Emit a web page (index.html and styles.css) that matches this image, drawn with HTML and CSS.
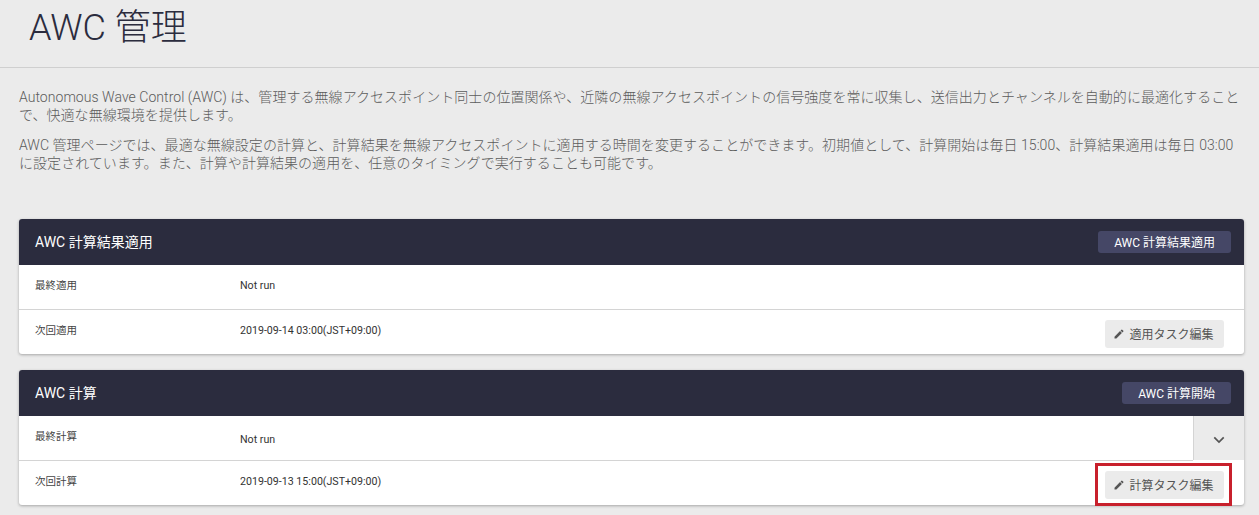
FILE: index.html
```html
<!DOCTYPE html>
<html lang="ja">
<head>
<meta charset="utf-8">
<title>AWC 管理</title>
<link rel="stylesheet" href="styles.css">
</head>
<body>
<header class="page-head"><h1>AWC 管理</h1></header>
<main class="content">
  <section class="intro">
    <p>Autonomous Wave Control (AWC) は、管理する無線アクセスポイント同士の位置関係や、近隣の無線アクセスポイントの信号強度を常に収集し、送信出力とチャンネルを自動的に最適化することで、快適な無線環境を提供します。</p>
    <p>AWC 管理ページでは、最適な無線設定の計算と、計算結果を無線アクセスポイントに適用する時間を変更することができます。初期値として、計算開始は毎日 15:00、計算結果適用は毎日 03:00 に設定されています。また、計算や計算結果の適用を、任意のタイミングで実行することも可能です。</p>
  </section>
  <section class="card">
    <div class="card-head"><h2>AWC 計算結果適用</h2><button class="head-btn">AWC 計算結果適用</button></div>
    <div class="row">
      <div class="label">最終適用</div><div class="value">Not run</div>
    </div>
    <div class="row last">
      <div class="label">次回適用</div><div class="value">2019-09-14 03:00(JST+09:00)</div>
      <button class="edit-btn"><svg class="pen" viewBox="0 0 24 24"><path d="M3 17.25V21h3.75L17.81 9.94l-3.75-3.75L3 17.25zM20.71 7.04a1 1 0 0 0 0-1.41l-2.34-2.34a1 1 0 0 0-1.41 0l-1.83 1.83 3.75 3.75 1.83-1.83z"/></svg>適用タスク編集</button>
    </div>
  </section>
  <section class="card">
    <div class="card-head"><h2>AWC 計算</h2><button class="head-btn">AWC 計算開始</button></div>
    <div class="row expandable">
      <div class="row-main">
        <div class="label">最終計算</div><div class="value shifted">Not run</div>
      </div>
      <div class="toggle"><svg class="chevron" viewBox="0 0 14 9"><path d="M1.5 1.5 7 7l5.5-5.5"/></svg></div>
    </div>
    <div class="row last">
      <div class="label">次回計算</div><div class="value">2019-09-13 15:00(JST+09:00)</div>
      <span class="annotated">
        <button class="edit-btn"><svg class="pen" viewBox="0 0 24 24"><path d="M3 17.25V21h3.75L17.81 9.94l-3.75-3.75L3 17.25zM20.71 7.04a1 1 0 0 0 0-1.41l-2.34-2.34a1 1 0 0 0-1.41 0l-1.83 1.83 3.75 3.75 1.83-1.83z"/></svg>計算タスク編集</button>
        <span class="red-box"></span>
      </span>
    </div>
  </section>
</main>
</body>
</html>
```
FILE: styles.css
```css
* { box-sizing: border-box; }
html, body { margin: 0; padding: 0; }
body {
  background: #ebebeb;
  font-family: Roboto, "Noto Sans CJK JP", sans-serif;
  color: #333;
  height: 515px;
  overflow: hidden;
}
.page-head {
  height: 68px;
  padding: 6px 0 0 29px;
  border-bottom: 1px solid #cfcfcf;
}
h1 {
  margin: 0;
  font-size: 36px;
  line-height: 44px;
  font-weight: 300;
  color: #2b2c3e;
}
.content { padding: 20px 15px 0 19px; }
.intro { height: 131px; }
.intro p {
  margin: 0 0 12px;
  font-size: 14px;
  line-height: 18px;
  font-weight: 300;
  letter-spacing: .045px;
  color: #5c5c5c;
}
.card {
  background: #fff;
  border-radius: 3px;
  box-shadow: 0 1px 3px rgba(0,0,0,.3);
  margin-bottom: 16px;
  height: 135px;
}
.card-head {
  height: 46px;
  background: #2b2c3e;
  border-radius: 3px 3px 0 0;
  display: flex;
  align-items: center;
  justify-content: space-between;
  padding: 0 13px 0 16px;
}
h2 {
  margin: 0 0 3px;
  font-size: 14px;
  font-weight: 400;
  color: #fff;
}
.head-btn {
  height: 22px;
  padding: 0 16px 2px;
  border: 0;
  border-radius: 3px;
  background: #454766;
  color: #fff;
  font: 400 12px Roboto, "Noto Sans CJK JP", sans-serif;
}
.row {
  height: 45px;
  display: flex;
  align-items: flex-start;
  padding-left: 16px;
  border-bottom: 1px solid #d4d4d4;
  position: relative;
}
.row.last { height: 44px; border-bottom: 0; padding-right: 20px; }
.row.expandable { padding-left: 0; border-bottom: 0; }
.row-main {
  flex: 1;
  height: 45px;
  display: flex;
  align-items: flex-start;
  padding-left: 16px;
  border-bottom: 1px solid #d4d4d4;
}
.toggle {
  width: 51px;
  height: 44px;
  background: #ebebeb;
  border-left: 1px solid #d4d4d4;
  display: flex;
  align-items: center;
  justify-content: center;
}
.chevron {
  width: 12px;
  height: 8px;
  fill: none;
  stroke: #555;
  stroke-width: 2;
  margin-top: 3px;
}
.label {
  width: 205px;
  padding-top: 14px;
  font-size: 10.5px;
  line-height: 14px;
  color: #444;
}
.value {
  flex: 1;
  padding-top: 14px;
  font-size: 10.65px;
  line-height: 14px;
  color: #333;
}
.value.shifted { padding-top: 17px; }
.edit-btn {
  height: 28px;
  margin-top: 10px;
  width: 119px;
  padding: 0 2px 2px 0;
  border: 0;
  border-radius: 3px;
  background: #ebebeb;
  color: #555;
  font: 400 12px Roboto, "Noto Sans CJK JP", sans-serif;
  display: flex;
  align-items: center;
  justify-content: center;
}
.pen { width: 12px; height: 12px; fill: #555; margin-right: 4px; margin-top: 2px; }
.annotated { position: relative; display: block; }
.red-box {
  position: absolute;
  left: -10px;
  right: -8px;
  top: 2px;
  bottom: -7px;
  border: 3px solid #c8202c;
}
```
